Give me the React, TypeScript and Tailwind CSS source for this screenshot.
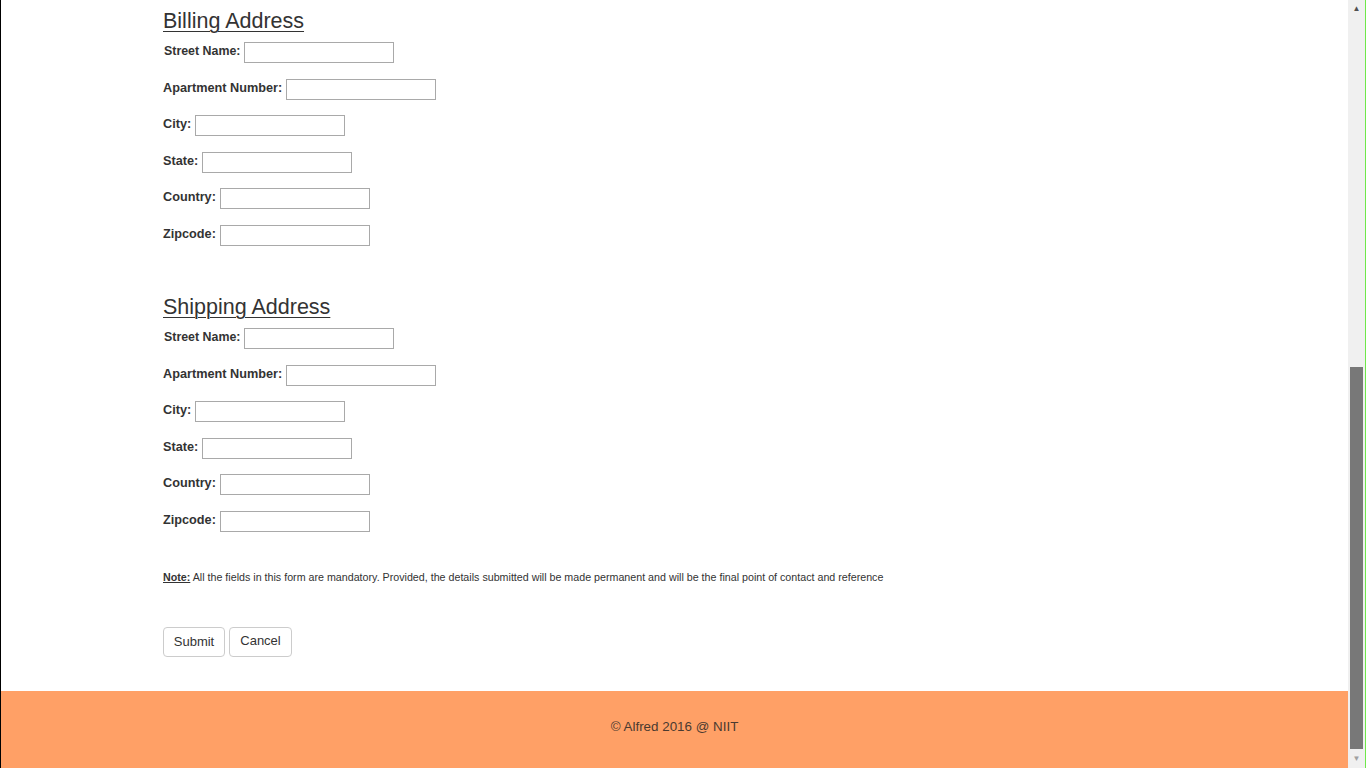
import React from "react"

const fields = ["Street Name:", "Apartment Number:", "City:", "State:", "Country:", "Zipcode:"]

function AddressBlock({ title }: { title: string }) {
  return (
    <div className="flex flex-col">
      <h2 className="h-[26px] text-[21.5px] leading-[26px] text-[#333] underline decoration-1 underline-offset-[3px]">{title}</h2>
      <div className="mt-[8px] flex flex-col gap-[15.6px]">
        {fields.map((f, i) => (
          <div key={f} className="flex h-[21px] items-center">
            <label className={`pb-[2px] font-bold text-[#333] ${i === 0 ? "pl-px text-[12.4px]" : "text-[12.7px]"}`}>{f}</label>
            <input className="ml-[4px] h-[21px] w-[150px] border border-[#a9a9a9] bg-white" />
          </div>
        ))}
      </div>
    </div>
  )
}

export default function App() {
  return (
    <div className="flex h-[768px] w-[1366px] overflow-hidden bg-white font-['Liberation_Sans',Arial,sans-serif]">
      <div className="flex flex-1 flex-col border-l border-black">
        <div className="flex flex-1 flex-col pl-[162px] pt-[8px]">
          <AddressBlock title="Billing Address" />
          <div className="h-[48px]" />
          <AddressBlock title="Shipping Address" />
          <p className="mt-[39px] h-[13px] text-[10.7px] leading-[13px] text-[#333]">
            <span className="font-bold underline">Note:</span> All the fields in this form are mandatory. Provided, the details submitted will be made permanent and will be the final point of contact and reference
          </p>
          <div className="mt-[43px] flex gap-[4px]">
            <button className="h-[30px] w-[62px] rounded-[4px] border border-[#ccc] bg-white text-[13px] text-[#333]">Submit</button>
            <button className="h-[30px] w-[63px] rounded-[4px] border border-[#ccc] bg-white pb-[2px] text-[13px] text-[#333]">Cancel</button>
          </div>
        </div>
        <footer className="flex h-[77px] items-center justify-center bg-[#ffa066] pb-[4px] text-[13.4px] text-[#4a3a30]">
          © Alfred 2016 @ NIIT
        </footer>
      </div>
      {/* scrollbar */}
      <div className="flex w-[17px] flex-col items-center bg-[#f0f0f0]">
        <div className="flex h-[17px] items-center justify-center text-[8px] text-[#505050]">▲</div>
        <div className="h-[350px]" />
        <div className="w-[13px] flex-1 bg-[#787878]" />
        <div className="flex h-[19px] items-center justify-center text-[8px] text-[#a0a0a0]">▼</div>
      </div>
      <div className="w-px bg-[#6ee84a]" />
    </div>
  )
}
